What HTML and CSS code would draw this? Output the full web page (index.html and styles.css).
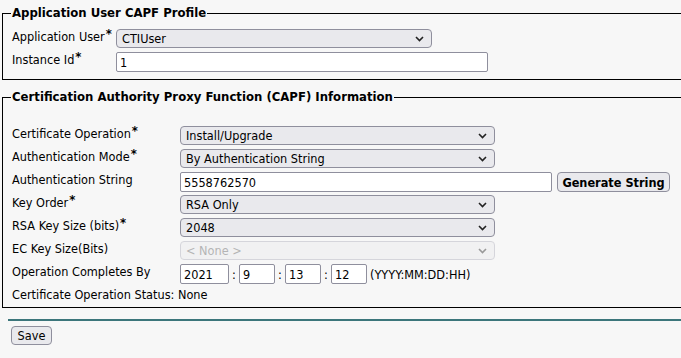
FILE: index.html
```html
<!DOCTYPE html>
<html lang="en">
<head>
    <meta charset="UTF-8">
    <title>Application User CAPF Profile Configuration</title>
    <link rel="stylesheet" href="styles.css">
</head>
<body>
    <fieldset class="panel panel-user">
        <legend>Application User CAPF Profile</legend>
        <div class="row row-user">
            <div class="label">Application User<sup>*</sup></div>
            <div class="field">
                <div class="select-wrap sel-user">
                    <select><option>CTIUser</option></select>
                    <svg class="chev" width="9" height="6" viewBox="0 0 9 6"><path d="M1 1 L4.5 4.5 L8 1" fill="none" stroke="#222" stroke-width="1.6"/></svg>
                </div>
            </div>
        </div>
        <div class="row row-user">
            <div class="label">Instance Id<sup>*</sup></div>
            <div class="field"><input class="txt txt-instance" type="text" value="1"></div>
        </div>
    </fieldset>

    <fieldset class="panel panel-capf">
        <legend>Certification Authority Proxy Function (CAPF) Information</legend>
        <div class="row">
            <div class="label">Certificate Operation<sup>*</sup></div>
            <div class="field">
                <div class="select-wrap sel-wide">
                    <select><option>Install/Upgrade</option></select>
                    <svg class="chev" width="9" height="6" viewBox="0 0 9 6"><path d="M1 1 L4.5 4.5 L8 1" fill="none" stroke="#222" stroke-width="1.6"/></svg>
                </div>
            </div>
        </div>
        <div class="row">
            <div class="label">Authentication Mode<sup>*</sup></div>
            <div class="field">
                <div class="select-wrap sel-wide">
                    <select><option>By Authentication String</option></select>
                    <svg class="chev" width="9" height="6" viewBox="0 0 9 6"><path d="M1 1 L4.5 4.5 L8 1" fill="none" stroke="#222" stroke-width="1.6"/></svg>
                </div>
            </div>
        </div>
        <div class="row">
            <div class="label">Authentication String</div>
            <div class="field">
                <input class="txt txt-auth" type="text" value="5558762570">
                <button class="btn btn-gen" type="button">Generate String</button>
            </div>
        </div>
        <div class="row">
            <div class="label">Key Order<sup>*</sup></div>
            <div class="field">
                <div class="select-wrap sel-wide">
                    <select><option>RSA Only</option></select>
                    <svg class="chev" width="9" height="6" viewBox="0 0 9 6"><path d="M1 1 L4.5 4.5 L8 1" fill="none" stroke="#222" stroke-width="1.6"/></svg>
                </div>
            </div>
        </div>
        <div class="row">
            <div class="label">RSA Key Size (bits)<sup>*</sup></div>
            <div class="field">
                <div class="select-wrap sel-wide">
                    <select><option>2048</option></select>
                    <svg class="chev" width="9" height="6" viewBox="0 0 9 6"><path d="M1 1 L4.5 4.5 L8 1" fill="none" stroke="#222" stroke-width="1.6"/></svg>
                </div>
            </div>
        </div>
        <div class="row">
            <div class="label">EC Key Size(Bits)</div>
            <div class="field">
                <div class="select-wrap sel-wide disabled">
                    <select disabled><option>&lt; None &gt;</option></select>
                    <svg class="chev" width="9" height="6" viewBox="0 0 9 6"><path d="M1 1 L4.5 4.5 L8 1" fill="none" stroke="#999" stroke-width="1.6"/></svg>
                </div>
            </div>
        </div>
        <div class="row">
            <div class="label">Operation Completes By</div>
            <div class="field date-field">
                <input class="txt txt-year" type="text" value="2021">
                <span class="colon">:</span>
                <input class="txt txt-part" type="text" value="9">
                <span class="colon">:</span>
                <input class="txt txt-part" type="text" value="13">
                <span class="colon">:</span>
                <input class="txt txt-part" type="text" value="12">
                <span class="hint">(YYYY:MM:DD:HH)</span>
            </div>
        </div>
        <div class="row status-row">
            <div class="status">Certificate Operation Status: None</div>
        </div>
    </fieldset>

    <div class="footer">
        <button class="btn btn-save" type="button">Save</button>
    </div>
</body>
</html>
```

FILE: styles.css
```css
html, body {
    margin: 0;
    padding: 0;
    overflow: hidden;
}

body {
    background: #f7f7f7;
    font-family: Tahoma, "DejaVu Sans Condensed", "DejaVu Sans", sans-serif;
    font-size: 12.6px;
    color: #000;
    width: 900px;
}

.panel {
    border: 1px solid #000;
    margin: 5px 0 0 2px;
    padding: 6px 0 6px 9px;
    width: 860px;
}

.panel legend {
    font-weight: bold;
    font-size: 13px;
    line-height: 16px;
    padding: 0 1px;
    margin-left: -1px;
}

.panel-capf {
    margin-top: 9px;
    padding-top: 19px;
    padding-bottom: 3px;
}

.row {
    display: flex;
    align-items: flex-start;
    height: 23px;
}

.label {
    width: 168px;
    padding-top: 2px;
    line-height: 15px;
    white-space: nowrap;
}

.row-user .label {
    width: 104px;
}

.label sup {
    font-size: 13px;
    font-weight: bold;
    line-height: 0;
    vertical-align: 3px;
    margin-left: 1px;
}

.field {
    display: flex;
    align-items: center;
    margin-top: 2px;
}

.select-wrap {
    position: relative;
    height: 19px;
}

.select-wrap select {
    appearance: none;
    -webkit-appearance: none;
    width: 100%;
    height: 19px;
    margin: 0;
    padding: 0 0 0 5px;
    font-family: inherit;
    font-size: 12.6px;
    color: #000;
    background: #e9e9ed;
    border: 1px solid #8f8f9d;
    border-radius: 4px;
}

.select-wrap .chev {
    position: absolute;
    right: 8px;
    top: 7px;
}

.select-wrap.disabled select {
    color: #999;
    background: #efeff1;
    border-color: #c8c8d0;
}

.sel-user {
    width: 316px;
}

.sel-wide {
    width: 315px;
}

.txt {
    box-sizing: border-box;
    height: 20px;
    margin: 0;
    padding: 0 3px;
    font-family: inherit;
    font-size: 12.6px;
    color: #000;
    background: #fff;
    border: 1px solid #8f8f9d;
    border-radius: 2px;
}

.txt-instance,
.txt-auth {
    width: 372px;
}

.btn {
    font-family: inherit;
    font-size: 12.6px;
    color: #000;
    background: #e9e9ed;
    border: 1px solid #8f8f9d;
    border-radius: 4px;
    margin: 0;
    cursor: pointer;
}

.btn-gen {
    font-weight: bold;
    height: 20px;
    width: 113px;
    padding: 0;
    margin-left: 5px;
}

.txt-year {
    width: 49px;
}

.txt-part {
    width: 36px;
}

.colon {
    width: 10px;
    text-align: center;
}

.hint {
    margin-left: 3px;
}

.status-row {
    height: 19px;
}

.status {
    padding-top: 2px;
    line-height: 15px;
}

.footer {
    margin: 11px 0 0 8px;
    border-top: 2px solid #3c767b;
    padding: 5px 0 0 3px;
}

.btn-save {
    height: 19px;
    width: 41px;
    padding: 0;
}
```
